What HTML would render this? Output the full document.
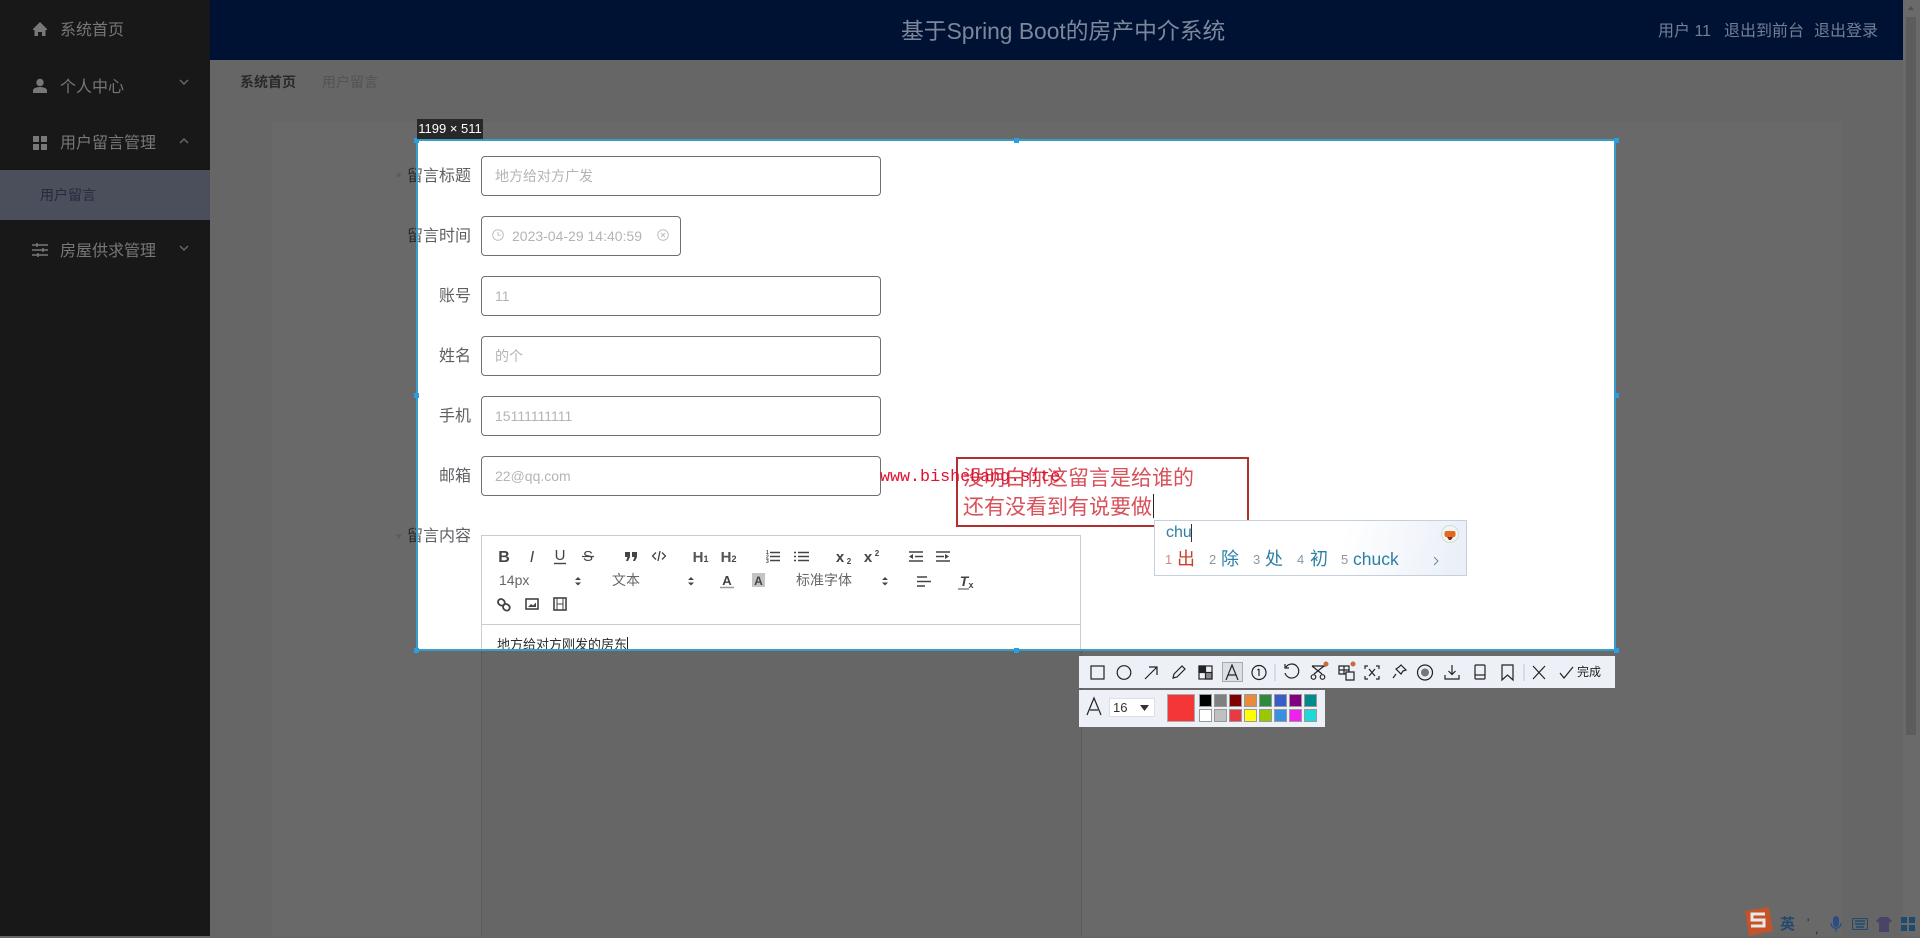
<!DOCTYPE html>
<html><head><meta charset="utf-8"><style>
*{box-sizing:border-box;margin:0;padding:0}
html,body{width:1920px;height:936px;overflow:hidden;background:#676767;font-family:"Liberation Sans","Noto Sans CJK SC",sans-serif}
.a{position:absolute;white-space:nowrap}
svg{position:absolute;overflow:visible}
.m{color:#777;font-size:16px;left:60px;line-height:20px}
.lb{font-size:16px;line-height:20px;width:90px;text-align:right;left:381px}
.inp{position:absolute;left:481px;width:400px;height:40px;border:1px solid #6f6f6f;border-radius:4px;background:#fff;color:#b4b4b4;font-size:14px;line-height:39px;padding-left:13px;white-space:nowrap}
.sw{position:absolute;width:13px;height:13px;border:1px solid #999}
.c{color:#2d7fa6;font-size:18px;line-height:24px;top:547px}
.n{color:#8a98a4;font-size:13px;line-height:24px;top:548px}
</style></head><body>
<!-- sidebar -->
<div class="a" style="left:0;top:0;width:210px;height:936px;background:#181818"></div>
<div class="a" style="left:0;top:170px;width:210px;height:50px;background:#4b4f5c"></div>
<svg style="left:32px;top:21px" width="16" height="16" viewBox="0 0 16 16"><path d="M8 1L1 8v1h1.500v6H6v-4h4v4h3.500V9H15V8z" fill="#787878"/></svg>
<svg style="left:32px;top:78px" width="16" height="16" viewBox="0 0 16 16"><circle cx="8" cy="4.500" r="3.700" fill="#787878"/><path d="M1 15v-2.500C1 10 5 9 8 9s7 1 7 3.500V15z" fill="#787878"/></svg>
<svg style="left:32px;top:135px" width="16" height="16" viewBox="0 0 16 16"><path d="M1 1h6v6H1zM9 1h6v6H9zM1 9h6v6H1zM9 9h6v6H9z" fill="#787878"/></svg>
<svg style="left:32px;top:243px" width="16" height="14" viewBox="0 0 16 14"><path d="M0 2h16M0 7h16M0 12h16M5 0v4M11 5v4M6 10v4" stroke="#787878" stroke-width="1.500" fill="none"/></svg>
<div class="a m" style="top:21px">系统首页</div>
<div class="a m" style="top:78px">个人中心</div>
<div class="a m" style="top:134px">用户留言管理</div>
<div class="a m" style="top:242px">房屋供求管理</div>
<div class="a" style="left:40px;top:185px;font-size:14px;line-height:20px;color:#252a3c">用户留言</div>
<svg style="left:179px;top:78px" width="10" height="8" viewBox="0 0 10 8"><path d="M1 2l4 4 4-4" stroke="#6a6a6a" stroke-width="1.400" fill="none"/></svg>
<svg style="left:179px;top:137px" width="10" height="8" viewBox="0 0 10 8"><path d="M1 6l4-4 4 4" stroke="#6a6a6a" stroke-width="1.400" fill="none"/></svg>
<svg style="left:179px;top:244px" width="10" height="8" viewBox="0 0 10 8"><path d="M1 2l4 4 4-4" stroke="#6a6a6a" stroke-width="1.400" fill="none"/></svg>
<!-- header -->
<div class="a" style="left:210px;top:0;width:1693px;height:60px;background:#001233"></div>
<div class="a" style="left:901px;top:16px;font-size:22.800px;line-height:30px;color:#7d879b">基于Spring Boot的房产中介系统</div>
<div class="a" style="left:1658px;top:22px;font-size:16px;line-height:20px;color:#727e96">用户 11</div>
<div class="a" style="left:1724px;top:22px;font-size:16px;line-height:20px;color:#727e96">退出到前台</div>
<div class="a" style="left:1814px;top:22px;font-size:16px;line-height:20px;color:#727e96">退出登录</div>
<!-- scrollbar -->
<div class="a" style="left:1903px;top:0;width:17px;height:936px;background:#6a6a6a"></div>
<div class="a" style="left:1906px;top:17px;width:10px;height:718px;background:#5c5c5c"></div>
<svg style="left:1908px;top:6px" width="6" height="4"><path d="M0 4l3-4 3 4z" fill="#505050"/></svg>
<!-- content dim -->
<div class="a" style="left:210px;top:60px;width:1693px;height:876px;background:#666"></div>
<div class="a" style="left:272px;top:122px;width:1570px;height:814px;background:#696969"></div>
<div class="a" style="left:240px;top:72px;font-size:14px;line-height:20px;font-weight:bold;color:#2a2a2a">系统首页</div>
<div class="a" style="left:322px;top:72px;font-size:14px;line-height:20px;color:#525252">用户留言</div>
<div class="a" style="left:481px;top:535px;width:601px;height:401px;border:1px solid #5c5c5c;border-bottom:0;background:#666"></div>
<!-- dim labels crossing selection -->
<div class="a" style="left:396px;top:169px;font-size:14px;line-height:16px;color:#555">*</div>
<div class="a" style="left:396px;top:530px;font-size:14px;line-height:16px;color:#555">*</div>
<div class="a lb" style="top:167px;color:#2b2b2b">留言标题</div>
<div class="a lb" style="top:227px;color:#2b2b2b">留言时间</div>
<div class="a lb" style="top:527px;color:#2b2b2b">留言内容</div>
<!-- selection -->
<div class="a" style="left:417px;top:140px;width:1199px;height:511px;background:#fff;overflow:hidden">
 <div style="position:absolute;left:-417px;top:-140px;width:1920px;height:936px">
  <div class="a lb" style="top:167px;color:#5e6064">留言标题</div>
  <div class="a lb" style="top:227px;color:#5e6064">留言时间</div>
  <div class="a lb" style="top:287px;color:#5e6064">账号</div>
  <div class="a lb" style="top:347px;color:#5e6064">姓名</div>
  <div class="a lb" style="top:407px;color:#5e6064">手机</div>
  <div class="a lb" style="top:467px;color:#5e6064">邮箱</div>
  <div class="a lb" style="top:527px;color:#5e6064">留言内容</div>
  <div class="inp" style="top:156px">地方给对方广发</div>
  <div class="inp" style="top:216px;width:200px;padding-left:30px">2023-04-29 14:40:59</div>
  <svg style="left:492px;top:229px" width="12" height="12" viewBox="0 0 12 12"><circle cx="6" cy="6" r="5.300" fill="none" stroke="#c0c0c0"/><path d="M6 3v3.300h2.500" fill="none" stroke="#c0c0c0"/></svg>
  <svg style="left:657px;top:229px" width="12" height="12" viewBox="0 0 12 12"><circle cx="6" cy="6" r="5.300" fill="none" stroke="#c0c0c0"/><path d="M4 4l4 4M8 4l-4 4" fill="none" stroke="#c0c0c0"/></svg>
  <div class="inp" style="top:276px">11</div>
  <div class="inp" style="top:336px">的个</div>
  <div class="inp" style="top:396px">15111111111</div>
  <div class="inp" style="top:456px">22@qq.com</div>
  <!-- editor -->
  <div class="a" style="left:481px;top:535px;width:600px;height:401px;border:1px solid #ccc"></div>
  <div class="a" style="left:481px;top:624px;width:600px;height:1px;background:#ccc"></div>
  <svg style="left:0;top:0" width="1920" height="936" font-family="Liberation Sans" fill="#444">
   <g font-size="16" text-anchor="middle">
    <text x="504" y="562" font-weight="bold">B</text>
    <text x="532" y="562" font-style="italic">I</text>
    <text x="560" y="560" font-size="15">U</text><path d="M554 563.500h12" stroke="#444" stroke-width="1.400"/>
    <text x="588" y="561" font-size="15">S</text><path d="M582 556.500h12" stroke="#444" stroke-width="1.200"/>
    <text x="700" y="562" font-size="15" font-weight="bold" fill="#555" dx="-2">H</text><text x="706" y="562" font-size="9" font-weight="bold">1</text>
    <text x="728" y="562" font-size="15" font-weight="bold" fill="#555" dx="-2">H</text><text x="734" y="562" font-size="9" font-weight="bold">2</text>
    <text x="840" y="562" font-size="15" font-weight="bold">x</text><text x="849" y="564" font-size="8" font-weight="bold">2</text>
    <text x="868" y="562" font-size="15" font-weight="bold">x</text><text x="877" y="556" font-size="8" font-weight="bold">2</text>
    <text x="727" y="585" font-size="13" font-weight="bold">A</text><path d="M720 587.500h14" stroke="#999" stroke-width="1.500"/>
    <rect x="752" y="573" width="13" height="14" fill="#c4c4c4"/><text x="758.500" y="585" font-size="12" font-weight="bold">A</text>
    <text x="964" y="586" font-size="14" font-style="italic" font-weight="bold">T</text><text x="971" y="588" font-size="9" font-weight="bold">x</text><path d="M958 589h11" stroke="#444"/>
   </g>
   <path d="M625 552h5v5l-2 4h-2l1.500-4H625zM632 552h5v5l-2 4h-2l1.500-4H632z" fill="#444"/>
   <path d="M656 552.500l-3.500 3.500 3.500 3.500M662 552.500l3.500 3.500-3.500 3.500M660 551l-2 10" fill="none" stroke="#444" stroke-width="1.300"/>
   <path d="M770 552.500h10M770 556.500h10M770 560.500h10M798 552.500h11M798 556.500h11M798 560.500h11" stroke="#444" stroke-width="1.400"/>
   <path d="M794 552.500h2M794 556.500h2M794 560.500h2" stroke="#444" stroke-width="1.400"/>
   <g font-size="5" font-weight="bold"><text x="766" y="554">1</text><text x="766" y="558.500">2</text><text x="766" y="563">3</text></g>
   <path d="M909 552h14M915 556.500h8M909 561h14" stroke="#444" stroke-width="1.500"/><path d="M913 554l-4 2.500 4 2.500z"/>
   <path d="M936 552h14M936 556.500h8M936 561h14" stroke="#444" stroke-width="1.500"/><path d="M945 554l4 2.500-4 2.500z"/>
   <path d="M578 577l-3 3h6zM578 585.500l-3-3h6zM691 577l-3 3h6zM691 585.500l-3-3h6zM885 577l-3 3h6zM885 585.500l-3-3h6z"/>
   <path d="M917 577h10M917 581.500h14M917 586h8" stroke="#444" stroke-width="1.500"/>
   <rect x="498" y="599" width="7" height="6" rx="3" fill="none" stroke="#444" stroke-width="1.800" transform="rotate(40 501 602)"/>
   <rect x="503" y="604" width="7" height="6" rx="3" fill="none" stroke="#444" stroke-width="1.800" transform="rotate(40 506 607)"/>
   <rect x="526" y="599" width="12" height="10" fill="none" stroke="#444" stroke-width="1.600"/><path d="M528 607l3-3 2 1.500 3-3v4.500z"/>
   <rect x="554" y="598" width="12" height="12" fill="none" stroke="#444" stroke-width="1.600"/><path d="M557 598v12M563 598v12M557 604h6" stroke="#444" fill="none"/>
   <g font-size="14" fill="#666" font-family="Liberation Sans, Noto Sans CJK SC">
    <text x="499" y="585">14px</text><text x="612" y="585">文本</text><text x="796" y="585">标准字体</text>
   </g>
  </svg>
  <div class="a" style="left:497px;top:635px;font-size:13px;line-height:20px;color:#2a2a2a">地方给对方刚发的房东</div>
  <div class="a" style="left:627px;top:637px;width:1px;height:16px;background:#222"></div>
 </div>
</div>
<!-- selection border + handles -->
<div class="a" style="left:416px;top:139px;width:1200px;height:512px;border:2px solid #3a9cc8"></div>
<div class="a" style="left:414px;top:138px;width:5px;height:5px;background:#2a9fe0"></div>
<div class="a" style="left:1014px;top:138px;width:5px;height:5px;background:#2a9fe0"></div>
<div class="a" style="left:1614px;top:138px;width:5px;height:5px;background:#2a9fe0"></div>
<div class="a" style="left:414px;top:393px;width:5px;height:5px;background:#2a9fe0"></div>
<div class="a" style="left:1614px;top:393px;width:5px;height:5px;background:#2a9fe0"></div>
<div class="a" style="left:414px;top:648px;width:5px;height:5px;background:#2a9fe0"></div>
<div class="a" style="left:1014px;top:648px;width:5px;height:5px;background:#2a9fe0"></div>
<div class="a" style="left:1614px;top:648px;width:5px;height:5px;background:#2a9fe0"></div>
<div class="a" style="left:417px;top:119px;width:66px;height:20px;background:#282828;color:#fff;font-size:13px;line-height:20px;text-align:center">1199 × 511</div>
<!-- annotation -->
<div class="a" style="left:956px;top:457px;width:293px;height:70px;border:2px solid #b03030"></div>
<div class="a" style="left:963px;top:465px;font-size:21px;line-height:28.500px;color:#d8505a">没明白你这留言是给谁的<br>还有没看到有说要做</div>
<div class="a" style="left:1153px;top:494px;width:1px;height:24px;background:#222"></div>
<div class="a" style="left:880px;top:468px;font-family:'Liberation Mono',monospace;font-size:16.700px;line-height:20px;color:#e01030">www.bishebang.site</div>
<!-- IME -->
<div class="a" style="left:1154px;top:520px;width:313px;height:56px;background:linear-gradient(100deg,#fff 60%,#e9eef7);border:1px solid #c4d0de"></div>
<div class="a" style="left:1166px;top:523px;font-size:16px;line-height:20px;color:#2d7fa6">chu</div>
<div class="a" style="left:1191px;top:524px;width:1px;height:18px;background:#333"></div>
<div class="a n" style="left:1165px;color:#c88">1</div><div class="a c" style="left:1177px;color:#c8402c">出</div>
<div class="a n" style="left:1209px">2</div><div class="a c" style="left:1221px">除</div>
<div class="a n" style="left:1253px">3</div><div class="a c" style="left:1265px">处</div>
<div class="a n" style="left:1297px">4</div><div class="a c" style="left:1310px">初</div>
<div class="a n" style="left:1341px">5</div><div class="a c" style="left:1353px;font-size:17.500px">chuck</div>
<svg style="left:1433px;top:556px" width="6" height="10"><path d="M1 1l4 4-4 4" fill="none" stroke="#6a8aa0"/></svg>
<svg style="left:1441px;top:524px" width="18" height="20"><circle cx="9" cy="10" r="8.500" fill="#f4f4f4" stroke="#cdd"/><rect x="3.500" y="7" width="11" height="6" rx="2" fill="#e06a20"/><path d="M6 13h6l-2 3H8z" fill="#803010"/></svg>
<!-- capture toolbars -->
<div class="a" style="left:1079px;top:656px;width:536px;height:32px;background:#eef0f7"></div>
<div class="a" style="left:1079px;top:690px;width:246px;height:37px;background:#eef0f7"></div>
<div class="a" style="left:1222px;top:662px;width:21px;height:20px;background:#dcdfe8;border:1px solid #aaa"></div>
<svg style="left:0;top:0" width="1920" height="936" fill="none" stroke="#222" stroke-width="1.200">
 <rect x="1091" y="666" width="13" height="13"/>
 <circle cx="1124" cy="672.500" r="6.800"/>
 <path d="M1145 679l12-12M1149 667h8v8"/>
 <path d="M1173 678l1-4 8-8 3 3-8 8z"/>
 <rect x="1199" y="666" width="13" height="13"/><rect x="1199" y="666" width="6.500" height="6.500" fill="#222"/><rect x="1205.500" y="672.500" width="6.500" height="6.500" fill="#888"/>
 <path d="M1226 680l6-15 6 15M1228.500 675h7"/>
 <circle cx="1259" cy="672.500" r="7"/><path d="M1259 669v7M1257.500 670l1.500-1"/>
 <path d="M1275 664v17M1524 664v17" stroke="#ccd"/>
 <path d="M1286 667a7 7 0 1 1-1 6M1285 664v4h4"/>
 <path d="M1312 666l10 8M1324 666l-10 8M1312 666h14"/><circle cx="1313.500" cy="677" r="2.300"/><circle cx="1322.500" cy="677" r="2.300"/>
 <path d="M1339 666h10v8h-10zM1344 666v8M1339 670h10"/><path d="M1346 672h8v8h-8z" fill="#eef0f7"/>
 <path d="M1365 669v-3h3M1379 669v-3h-3M1365 676v3h3M1379 676v3h-3M1369 669l6 7M1375 669l-6 7"/>
 <path d="M1401 665l5 5-3 1-2 3-5-5 3-2zM1396 674l-3 4"/>
 <circle cx="1425" cy="672.500" r="7.500"/><circle cx="1425" cy="672.500" r="4" fill="#777" stroke="none"/>
 <path d="M1452 665v9M1448.500 671l3.500 3.500 3.500-3.500M1445 675v4h14v-4"/>
 <rect x="1475" y="665" width="10" height="14" rx="1"/><path d="M1475 675h10"/>
 <path d="M1502 665h11v15l-5.500-5-5.500 5z"/>
 <path d="M1533 666l12 13M1545 666l-12 13"/>
 <path d="M1560 673l4 5 9-11"/>
 <path d="M1087 715l7-17 7 17M1090 710h8"/>
</svg>
<svg style="left:1350px;top:661px" width="6" height="6"><circle cx="3" cy="3" r="2.500" fill="#c86a3a"/></svg>
<svg style="left:1323px;top:661px" width="6" height="6"><circle cx="3" cy="3" r="2.500" fill="#c86a3a"/></svg>
<div class="a" style="left:1577px;top:664px;font-size:12px;line-height:16px;color:#222">完成</div>
<div class="a" style="left:1109px;top:698px;width:46px;height:19px;background:#fff;border:1px solid #dde;font-size:13px;line-height:17px;padding-left:3px;color:#333">16</div>
<svg style="left:1140px;top:705px" width="9" height="6"><path d="M0 0h9L4.500 6z" fill="#333"/></svg>
<div class="a" style="left:1167px;top:694px;width:28px;height:28px;background:#f53636;border:1px solid #aaa"></div>
<div class="sw" style="left:1199px;top:694px;background:#000"></div><div class="sw" style="left:1214px;top:694px;background:#808080"></div><div class="sw" style="left:1229px;top:694px;background:#800000"></div><div class="sw" style="left:1244px;top:694px;background:#e88c3c"></div><div class="sw" style="left:1259px;top:694px;background:#2e8b3e"></div><div class="sw" style="left:1274px;top:694px;background:#3a5cc8"></div><div class="sw" style="left:1289px;top:694px;background:#800080"></div><div class="sw" style="left:1304px;top:694px;background:#008b8b"></div>
<div class="sw" style="left:1199px;top:709px;background:#fff"></div><div class="sw" style="left:1214px;top:709px;background:#c0c0c0"></div><div class="sw" style="left:1229px;top:709px;background:#e83a44"></div><div class="sw" style="left:1244px;top:709px;background:#ffff00"></div><div class="sw" style="left:1259px;top:709px;background:#9ac800"></div><div class="sw" style="left:1274px;top:709px;background:#3a90e0"></div><div class="sw" style="left:1289px;top:709px;background:#f020f0"></div><div class="sw" style="left:1304px;top:709px;background:#20d8d8"></div>
<!-- IME status bar -->
<svg style="left:1743px;top:906px" width="30" height="30" viewBox="0 0 30 30"><path d="M2 5l24-4 4 24-24 5z" fill="#c4532a"/><path d="M22 8H9v6h12v6H8" fill="none" stroke="#e8e8e8" stroke-width="3"/></svg>
<div class="a" style="left:1780px;top:916px;font-size:15px;line-height:18px;font-weight:bold;color:#24486e">英</div>
<div class="a" style="left:1807px;top:914px;font-size:12px;line-height:18px;color:#222">'</div>
<div class="a" style="left:1815px;top:920px;font-size:12px;line-height:18px;color:#222">,</div>
<svg style="left:1830px;top:916px" width="12" height="18"><rect x="3" y="0" width="6" height="11" rx="3" fill="#2c4c86"/><path d="M1 7c0 7 10 7 10 0M6 12v4" fill="none" stroke="#2c4c86" stroke-width="1.300"/></svg>
<svg style="left:1852px;top:918px" width="16" height="12"><rect x=".5" y=".5" width="15" height="11" rx="1" fill="none" stroke="#1f4a70"/><path d="M3 3h10M3 6h10M4 9h8" stroke="#1f4a70" stroke-width="1.500"/></svg>
<svg style="left:1876px;top:917px" width="16" height="15"><path d="M4 0h8l4 4-3 2v9H3V6L0 4z" fill="#4a4466"/></svg>
<svg style="left:1901px;top:917px" width="14" height="14"><path d="M0 0h6v6H0zM8 0h6v6H8zM0 8h6v6H0zM8 8h6v6H8z" fill="#1f4a70"/></svg>
</body></html>
